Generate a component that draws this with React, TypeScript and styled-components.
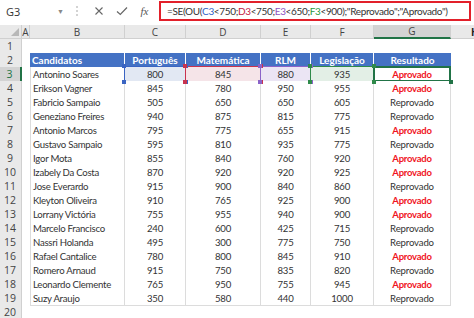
import React from "react";
import styled, { createGlobalStyle, css } from "styled-components";

const GlobalStyle = createGlobalStyle`
  html, body { margin: 0; padding: 0; background: #ffffff; }
  body { font-family: Lato, "Noto Sans", sans-serif; }
  * { box-sizing: border-box; }
`;

const COLS = "22px 8px 95px 61px 75px 50px 63px 77px 23px";

const Page = styled.div`
  width: 474px;
  height: 318px;
  overflow: hidden;
  background: #ffffff;
  display: flex;
  flex-direction: column;
`;

const FormulaBar = styled.div`
  height: 25px;
  display: flex;
  align-items: flex-start;
  padding-top: 1px;
  background: #ffffff;
  flex-shrink: 0;
`;

const NameBox = styled.div`
  width: 70px;
  height: 20px;
  display: flex;
  align-items: center;
  justify-content: space-between;
  padding: 0 6px 0 6px;
  font-family: "Open Sans", sans-serif;
  font-size: 11px;
  color: #333;
`;

const Caret = styled.span`
  font-size: 7px;
  color: #888;
`;

const Dots = styled.div`
  width: 14px;
  height: 20px;
  display: flex;
  flex-direction: column;
  align-items: center;
  justify-content: center;
  gap: 2px;
  span {
    width: 2px;
    height: 2px;
    background: #c4c4c4;
    border-radius: 1px;
  }
`;

const IconGroup = styled.div`
  height: 20px;
  display: flex;
  align-items: center;
  margin-left: 3px;
`;

const IconBtn = styled.div`
  width: 23px;
  height: 20px;
  display: flex;
  align-items: center;
  justify-content: center;
  color: #666;
`;

const Fx = styled.span`
  font-family: "Liberation Serif", serif;
  font-style: italic;
  font-size: 11px;
  color: #555;
`;

const FormulaBox = styled.div`
  margin-left: 3px;
  flex: 1;
  height: 20px;
  margin-right: 3px;
  border: 2px solid #e2202a;
  display: flex;
  align-items: center;
  padding-left: 6px;
  font-family: Lato, sans-serif;
  font-size: 10px;
  letter-spacing: -0.35px;
  color: #333;
  white-space: nowrap;
  overflow: hidden;
`;

const Ref = styled.span<{ $c: string }>`
  color: ${(p) => p.$c};
`;

const Row = styled.div`
  display: grid;
  grid-template-columns: ${COLS};
  height: 14px;
  flex-shrink: 0;
`;

const Corner = styled.div`
  background: #e9e9e9;
  border-right: 1px solid #d0d0d0;
  border-bottom: 1px solid #d0d0d0;
  position: relative;
  &::after {
    content: "";
    position: absolute;
    right: 2px;
    bottom: 2px;
    width: 0;
    height: 0;
    border-left: 8px solid transparent;
    border-bottom: 8px solid #b8b8b8;
  }
`;

const ColHead = styled.div<{ $active?: boolean }>`
  background: ${(p) => (p.$active ? "#d3d3d3" : "#e9e9e9")};
  border-right: 1px solid #d0d0d0;
  border-bottom: ${(p) => (p.$active ? "2px solid #217346" : "1px solid #d0d0d0")};
  font-family: "Open Sans", sans-serif;
  font-size: 10px;
  color: #444;
  display: flex;
  align-items: center;
  justify-content: center;
  overflow: hidden;
`;

const HCol = styled(ColHead)`
  justify-content: flex-start;
  padding-left: 20px;
  border-right: none;
  font-weight: 700;
  color: #222;
`;

const RowHead = styled.div<{ $active?: boolean }>`
  background: ${(p) => (p.$active ? "#d3d3d3" : "#e9e9e9")};
  border-right: ${(p) => (p.$active ? "2px solid #217346" : "1px solid #d0d0d0")};
  border-bottom: 1px solid #d6d6d6;
  font-family: "Open Sans", sans-serif;
  font-size: 10.5px;
  color: ${(p) => (p.$active ? "#217346" : "#444")};
  display: flex;
  align-items: center;
  justify-content: center;
  padding-right: 1px;
`;

const Blank = styled.div`
  background: #ffffff;
`;

const HeadCell = styled.div<{ $left?: boolean; $last?: boolean }>`
  background: #4472c4;
  color: #ffffff;
  font-weight: 700;
  font-size: 10px;
  display: flex;
  align-items: center;
  justify-content: ${(p) => (p.$left ? "flex-start" : "center")};
  padding-left: ${(p) => (p.$left ? "2px" : "0")};
  border-right: ${(p) => (p.$last ? "none" : "1px solid #ffffff")};
  border-bottom: 1px solid #3d67b3;
  white-space: nowrap;
  overflow: hidden;
`;

type Hl = "blue" | "red" | "purple" | "green" | "active";

const HL: Record<Hl, { b: string; bg: string; w: number }> = {
  blue: { b: "#3a64c2", bg: "#e2e8f3", w: 1.5 },
  red: { b: "#c8334f", bg: "#f5e4e8", w: 1.5 },
  purple: { b: "#8a63c8", bg: "#ebe5f4", w: 1.5 },
  green: { b: "#2f8a4a", bg: "#e3efe6", w: 1.5 },
  active: { b: "#217346", bg: "#ffffff", w: 2 },
};

const Cell = styled.div<{ $left?: boolean; $first?: boolean; $hl?: Hl; $ok?: boolean }>`
  position: relative;
  display: flex;
  align-items: center;
  justify-content: ${(p) => (p.$left ? "flex-start" : "center")};
  padding-left: ${(p) => (p.$left ? "2px" : "0")};
  font-size: ${(p) => (p.$ok ? "9.5px" : "9.6px")};
  letter-spacing: ${(p) => (p.$ok ? "-0.25px" : p.$left ? "-0.25px" : "-0.15px")};
  color: ${(p) => (p.$ok ? "#f0141e" : "#333333")};
  font-weight: ${(p) => (p.$ok ? 700 : 400)};
  border-right: 1px solid #dcdcdc;
  border-bottom: 1px solid #dcdcdc;
  border-left: ${(p) => (p.$first ? "1px solid #dcdcdc" : "none")};
  white-space: nowrap;
  background: #ffffff;
  ${(p) =>
    p.$hl &&
    css`
      background: ${HL[p.$hl].bg};
      &::before {
        content: "";
        position: absolute;
        left: -1px;
        top: -1px;
        right: -1px;
        bottom: -1px;
        border: ${HL[p.$hl].w}px solid ${HL[p.$hl].b};
        pointer-events: none;
      }
    `}
`;

const Handle = styled.span<{ $c: string; $pos: string }>`
  position: absolute;
  width: 4px;
  height: 4px;
  background: ${(p) => p.$c};
  z-index: 2;
  ${(p) => (p.$pos.includes("t") ? "top: -3px;" : "bottom: -3px;")}
  ${(p) => (p.$pos.includes("l") ? "left: -3px;" : "right: -3px;")}
`;

const XIcon = () => (
  <svg width="10" height="10" viewBox="0 0 10 10">
    <path d="M1.5 1.5 L8.5 8.5 M8.5 1.5 L1.5 8.5" stroke="#666" strokeWidth="1.1" fill="none" />
  </svg>
);

const CheckIcon = () => (
  <svg width="12" height="10" viewBox="0 0 12 10">
    <path d="M1 5.5 L4.3 8.5 L11 1.5" stroke="#666" strokeWidth="1.2" fill="none" />
  </svg>
);

type D = [string, number, number, number, number, boolean];
const data: D[] = [
  ["Antonino Soares", 800, 845, 880, 935, true],
  ["Erikson Vagner", 845, 780, 950, 955, true],
  ["Fabricio Sampaio", 505, 650, 650, 605, false],
  ["Geneziano Freires", 940, 875, 815, 775, false],
  ["Antonio Marcos", 795, 775, 655, 915, true],
  ["Gustavo Sampaio", 595, 810, 935, 775, false],
  ["Igor Mota", 855, 840, 760, 920, true],
  ["Izabely Da Costa", 870, 920, 920, 925, true],
  ["Jose Everardo", 915, 900, 840, 860, false],
  ["Kleyton Oliveira", 910, 765, 925, 900, true],
  ["Lorrany Victória", 755, 955, 940, 900, true],
  ["Marcelo Francisco", 240, 600, 425, 715, false],
  ["Nassri Holanda", 495, 300, 775, 750, false],
  ["Rafael Cantalice", 780, 800, 845, 910, true],
  ["Romero Arnaud", 915, 750, 835, 820, false],
  ["Leonardo Clemente", 765, 950, 755, 945, true],
  ["Suzy Araujo", 350, 580, 440, 1000, false],
];

const corners = ["tl", "tr", "bl", "br"];

const Handles = ({ c, only }: { c: string; only?: string[] }) => (
  <>
    {(only ?? corners).map((p) => (
      <Handle key={p} $c={c} $pos={p} />
    ))}
  </>
);

export default function App() {
  return (
    <>
      <GlobalStyle />
      <Page>
        <FormulaBar>
          <NameBox>
            <span>G3</span>
            <Caret>▼</Caret>
          </NameBox>
          <Dots>
            <span />
            <span />
            <span />
          </Dots>
          <IconGroup>
            <IconBtn>
              <XIcon />
            </IconBtn>
            <IconBtn>
              <CheckIcon />
            </IconBtn>
            <IconBtn>
              <Fx>fx</Fx>
            </IconBtn>
          </IconGroup>
          <FormulaBox>
            =SE(OU(<Ref $c="#2f62c8">C3</Ref>&lt;750;<Ref $c="#c21b3f">D3</Ref>&lt;750;
            <Ref $c="#8d52c0">E3</Ref>&lt;650;<Ref $c="#2a9a3c">F3</Ref>&lt;900);"Reprovado";"Aprovado")
          </FormulaBox>
        </FormulaBar>

        <Row>
          <Corner />
          <ColHead>A</ColHead>
          <ColHead>B</ColHead>
          <ColHead>C</ColHead>
          <ColHead>D</ColHead>
          <ColHead>E</ColHead>
          <ColHead>F</ColHead>
          <ColHead $active>G</ColHead>
          <HCol>H</HCol>
        </Row>

        <Row>
          <RowHead>1</RowHead>
          {Array.from({ length: 8 }).map((_, i) => (
            <Blank key={i} />
          ))}
        </Row>

        <Row>
          <RowHead>2</RowHead>
          <Blank />
          <HeadCell $left>Candidatos</HeadCell>
          <HeadCell>Português</HeadCell>
          <HeadCell>Matemática</HeadCell>
          <HeadCell>RLM</HeadCell>
          <HeadCell>Legislação</HeadCell>
          <HeadCell $last>Resultado</HeadCell>
          <Blank />
        </Row>

        {data.map(([name, a, b, c, d, ok], i) => {
          const first = i === 0;
          return (
            <Row key={name}>
              <RowHead $active={first}>{i + 3}</RowHead>
              <Blank />
              <Cell $left $first>
                {name}
              </Cell>
              <Cell $hl={first ? "blue" : undefined}>
                {a}
                {first && <Handles c={HL.blue.b} />}
              </Cell>
              <Cell $hl={first ? "red" : undefined}>
                {b}
                {first && <Handles c={HL.red.b} />}
              </Cell>
              <Cell $hl={first ? "purple" : undefined}>
                {c}
                {first && <Handles c={HL.purple.b} />}
              </Cell>
              <Cell $hl={first ? "green" : undefined}>
                {d}
                {first && <Handles c={HL.green.b} />}
              </Cell>
              <Cell $ok={ok} $hl={first ? "active" : undefined}>
                {ok ? "Aprovado" : "Reprovado"}
                {first && <Handles c={HL.active.b} only={["br"]} />}
              </Cell>
              <Blank />
            </Row>
          );
        })}

        <Row>
          <RowHead>20</RowHead>
          {Array.from({ length: 8 }).map((_, i) => (
            <Blank key={i} />
          ))}
        </Row>
      </Page>
    </>
  );
}
